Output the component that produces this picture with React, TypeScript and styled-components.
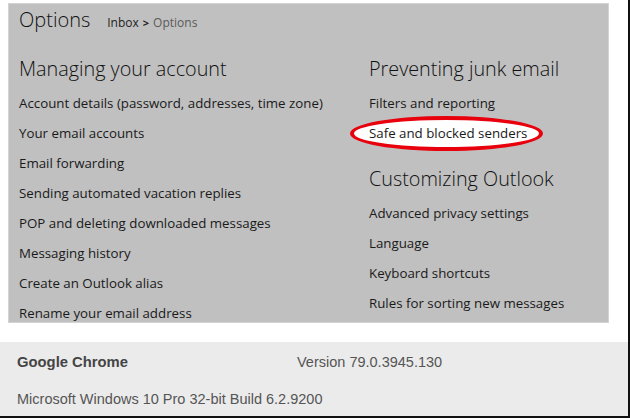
import React from "react";
import styled, { createGlobalStyle } from "styled-components";

const Global = createGlobalStyle`
  html, body { margin: 0; padding: 0; background: #ffffff; }
  body { font-family: "Open Sans", "Noto Sans", sans-serif; }
`;

const Page = styled.div`
  width: 630px;
  height: 418px;
  box-sizing: border-box;
  border-right: 2px solid #111;
  display: flex;
  flex-direction: column;
  overflow: hidden;
`;

const Panel = styled.section`
  margin: 3px 0 0 8px;
  width: 601px;
  height: 320px;
  box-sizing: border-box;
  background: #c0c0c0;
  border: 1px solid #d4d4d4;
  padding: 0 0 0 10px;
  display: flex;
  flex-direction: column;
  flex-shrink: 0;
`;

const TitleRow = styled.header`
  height: 32px;
  display: flex;
  align-items: baseline;
  gap: 17px;
  line-height: 32px;
`;

const Title = styled.h1`
  margin: 0;
  font-size: 20px;
  font-weight: 300;
  color: #111;
`;

const Crumbs = styled.nav`
  font-size: 12px;
  color: #222;
  display: flex;
  gap: 4px;
  align-items: baseline;
`;

const Sep = styled.span`
  font-weight: 700;
  font-size: 11px;
`;

const Current = styled.span`
  color: #5a5a5a;
`;

const Columns = styled.div`
  margin-top: 16px;
  display: grid;
  grid-template-columns: 350px 1fr;
`;

const Column = styled.div`
  display: flex;
  flex-direction: column;
`;

const Heading = styled.h2<{ $spaced?: boolean }>`
  margin: ${(p) => (p.$spaced ? "14px" : "0")} 0 2px;
  font-size: 19.8px;
  font-weight: 300;
  line-height: 34px;
  color: #111;
`;

const Item = styled.div`
  position: relative;
  isolation: isolate;
  font-size: 13.3px;
  line-height: 30px;
  height: 30px;
  color: #1a1a1a;
  white-space: nowrap;
`;

const Circled = styled.span`
  position: relative;
  &::before {
    content: "";
    position: absolute;
    z-index: -1;
    left: -19px;
    right: -16px;
    top: -8px;
    bottom: -9px;
    background: #ffffff;
    border: 4px solid #e8000c;
    border-radius: 50%;
  }
`;

const Footer = styled.footer`
  margin-top: 19px;
  flex: 1;
  background: #ebebeb;
  border-bottom: 2px solid #111;
  padding: 0 0 0 17px;
  display: grid;
  grid-template-columns: 280px 1fr;
  grid-template-rows: 37px 37px;
  align-items: center;
  font-family: "Liberation Sans", Arial, sans-serif;
  font-size: 14.5px;
  color: #555;
`;

const Product = styled.div`
  font-weight: 700;
  font-size: 14.8px;
  color: #444;
  padding-top: 2px;
`;

const FooterText = styled.div<{ $wide?: boolean }>`
  grid-column: ${(p) => (p.$wide ? "1 / 3" : "auto")};
  padding-top: 2px;
`;

const left = [
  "Account details (password, addresses, time zone)",
  "Your email accounts",
  "Email forwarding",
  "Sending automated vacation replies",
  "POP and deleting downloaded messages",
  "Messaging history",
  "Create an Outlook alias",
  "Rename your email address",
];

const customizing = [
  "Advanced privacy settings",
  "Language",
  "Keyboard shortcuts",
  "Rules for sorting new messages",
];

export default function App() {
  return (
    <>
      <Global />
      <Page>
        <Panel>
          <TitleRow>
            <Title>Options</Title>
            <Crumbs>
              <span>Inbox</span>
              <Sep>&gt;</Sep>
              <Current>Options</Current>
            </Crumbs>
          </TitleRow>
          <Columns>
            <Column>
              <Heading>Managing your account</Heading>
              {left.map((t) => (
                <Item key={t}>{t}</Item>
              ))}
            </Column>
            <Column>
              <Heading>Preventing junk email</Heading>
              <Item>Filters and reporting</Item>
              <Item>
                <Circled>Safe and blocked senders</Circled>
              </Item>
              <Heading $spaced>Customizing Outlook</Heading>
              {customizing.map((t) => (
                <Item key={t}>{t}</Item>
              ))}
            </Column>
          </Columns>
        </Panel>
        <Footer>
          <Product>Google Chrome</Product>
          <FooterText>Version 79.0.3945.130</FooterText>
          <FooterText $wide>Microsoft Windows 10 Pro 32-bit Build 6.2.9200</FooterText>
        </Footer>
      </Page>
    </>
  );
}
